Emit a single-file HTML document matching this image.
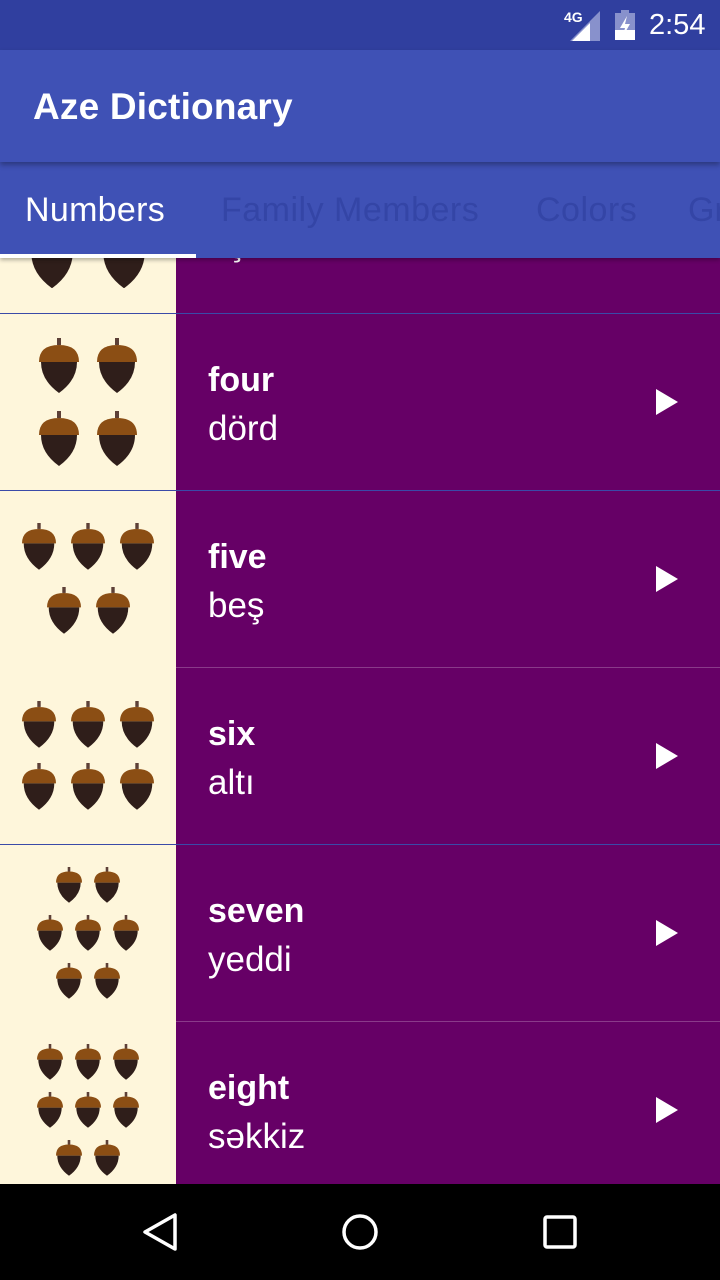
<!DOCTYPE html>
<html><head><meta charset="utf-8"><style>
*{margin:0;padding:0;box-sizing:border-box}
body{width:720px;height:1280px;overflow:hidden;position:relative;font-family:"Liberation Sans",sans-serif;background:#660066}
.abs{position:absolute}
#status{left:0;top:0;width:720px;height:50px;background:#303F9F}
#appbar{left:0;top:50px;width:720px;height:112px;background:#3F51B5;z-index:3;box-shadow:0 3px 5px rgba(0,0,0,.3)}
#tabs{left:0;top:162px;width:720px;height:96px;background:#3F51B5;z-index:2;box-shadow:0 2px 4px rgba(0,0,0,.3)}
.tab{position:absolute;top:29px;font-size:34px;color:#3445a6;white-space:nowrap}
#left{left:0;top:0;width:176px;height:1184px;background:#FEF6DB}
.div{position:absolute;left:0;width:720px;height:1px;background:#3a4aa8}
.div2{position:absolute;left:176px;width:544px;height:1px;background:#8a3a8a}
.en{position:absolute;left:208px;font-size:34px;font-weight:bold;color:#fff}
.az{position:absolute;left:208px;font-size:35px;color:#fff}
.play{position:absolute;left:656px;width:0;height:0;border-left:22px solid #fff;border-top:13px solid transparent;border-bottom:13px solid transparent}
#nav{left:0;top:1184px;width:720px;height:96px;background:#000}
svg.ac{position:absolute}
</style></head><body>
<div id="left" class="abs"></div>
<div id="acorns"></div>
<div class="div" style="top:313px"></div>
<div class="div" style="top:490px"></div>
<div class="div2" style="top:667px"></div>
<div class="div" style="top:844px"></div>
<div class="div2" style="top:1021px"></div>

<div class="az" style="top:224px">üç</div>
<div class="en" style="top:361px">four</div><div class="az" style="top:409px">dörd</div><div class="play" style="top:389px"></div>
<div class="en" style="top:538px">five</div><div class="az" style="top:586px">beş</div><div class="play" style="top:566px"></div>
<div class="en" style="top:715px">six</div><div class="az" style="top:763px">altı</div><div class="play" style="top:743px"></div>
<div class="en" style="top:892px">seven</div><div class="az" style="top:940px">yeddi</div><div class="play" style="top:920px"></div>
<div class="en" style="top:1069px">eight</div><div class="az" style="top:1117px">səkkiz</div><div class="play" style="top:1097px"></div>

<div id="status" class="abs">
<div class="abs" style="left:564px;top:9px;font-size:14px;font-weight:bold;color:#fff">4G</div>
<svg class="abs" style="left:570px;top:11px" width="30" height="30"><polygon points="30,0 30,30 0,30" fill="#8891cc"/><polygon points="20,12 20,30 2,30" fill="#fff"/></svg>
<svg class="abs" style="left:615px;top:10px" width="20" height="30"><rect x="6" y="0" width="8" height="3" fill="#8891cc"/><rect x="0" y="3" width="20" height="27" fill="#8891cc"/><rect x="0" y="20" width="20" height="10" fill="#fff"/><polygon points="12,6 5,18 10,18 8,26 15,14 10,14" fill="#fff"/></svg>
<div class="abs" style="left:649px;top:9px;font-size:29px;color:#fff">2:54</div>
</div>
<div id="appbar" class="abs"><div class="abs" style="left:33px;top:36px;font-size:37px;font-weight:bold;color:#fff;letter-spacing:0.2px">Aze Dictionary</div></div>
<div id="tabs" class="abs">
<div class="tab" style="left:25px;color:#fff;letter-spacing:0.3px">Numbers</div>
<div class="tab" style="left:221px;letter-spacing:0.5px">Family Members</div>
<div class="tab" style="left:536px;letter-spacing:0.5px">Colors</div>
<div class="tab" style="left:688px">Gr</div>
<div class="abs" style="left:0;top:92px;width:196px;height:4px;background:#fff"></div>
</div>
<div id="nav" class="abs">
<svg class="abs" style="left:140px;top:28px" width="40" height="40"><polygon points="35,3 35,37 5,20" fill="none" stroke="#fff" stroke-width="3.5" stroke-linejoin="round"/></svg>
<svg class="abs" style="left:340px;top:28px" width="40" height="40"><circle cx="20" cy="20" r="16" fill="none" stroke="#fff" stroke-width="3.5"/></svg>
<svg class="abs" style="left:542px;top:30px" width="36" height="36"><rect x="3" y="3" width="30" height="30" rx="2" fill="none" stroke="#fff" stroke-width="3.5"/></svg>
</div>
<script>
var A=[
[46,[[52,225],[124,225]]],
[40,[[59,338],[117,338],[59,411],[117,411]]],
[34,[[39,523],[88,523],[137,523],[64,587],[113,587]]],
[34,[[39,701],[88,701],[137,701],[39,763],[88,763],[137,763]]],
[26,[[69,867],[107,867],[50,915],[88,915],[126,915],[69,963],[107,963]]],
[26,[[50,1044],[88,1044],[126,1044],[50,1092],[88,1092],[126,1092],[69,1140],[107,1140]]]
];
var h='';
A.forEach(function(g){var w=g[0];g[1].forEach(function(p){var hh=w*55/40;
h+='<svg class="ac" viewBox="0 0 40 55" width="'+w+'" height="'+hh+'" style="left:'+(p[0]-w/2)+'px;top:'+p[1]+'px"><rect x="18" y="0" width="4" height="7" fill="#5d4037"/><path d="M0 24Q0 7 20 7Q40 7 40 24Z" fill="#8B4E14"/><path d="M2 24L38 24Q38 42 20 55Q2 42 2 24Z" fill="#2F1E1A"/></svg>';});});
document.getElementById('acorns').innerHTML=h;
</script>
</body></html>
